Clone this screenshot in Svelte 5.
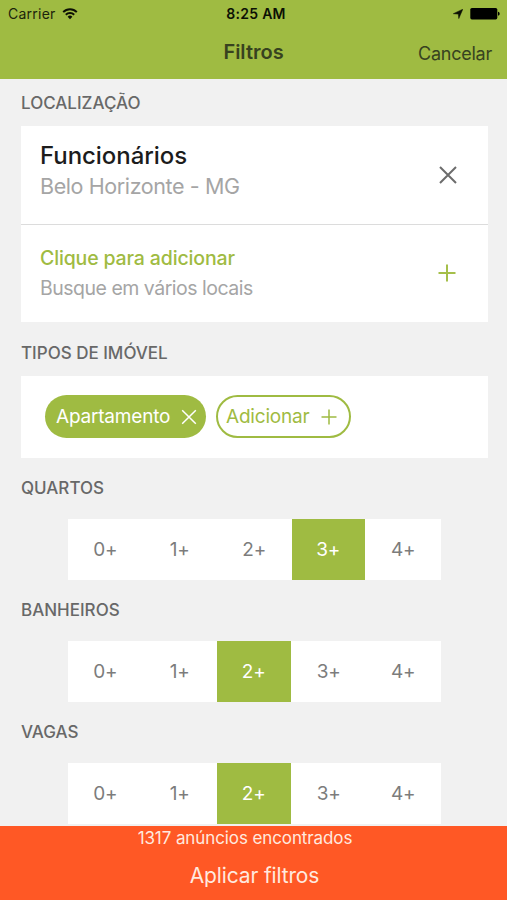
<script lang="ts">
	let rooms = $state([
		{ label: 'Quartos', selected: 3 },
		{ label: 'Banheiros', selected: 2 },
		{ label: 'Vagas', selected: 2 }
	]);

	const options = [0, 1, 2, 3, 4];
</script>

<div class="screen">
	<header>
		<div class="status-bar">
			<div class="carrier">
				<span>Carrier</span>
				<svg width="16" height="12" viewBox="0 0 16 12" fill="none" stroke="#0c1004" stroke-width="2">
					<path d="M1.2 4.1a9.6 9.6 0 0 1 13.6 0"></path>
					<path d="M3.8 6.8a6 6 0 0 1 8.4 0"></path>
					<path d="M8 11.3 5.6 8.8a3.4 3.4 0 0 1 4.8 0z" fill="#0c1004" stroke="none"></path>
				</svg>
			</div>
			<span class="time">8:25 AM</span>
			<div class="indicators">
				<svg width="10" height="10" viewBox="0 0 10 10"><path d="M9.8.2 5.8 9.6 5.3 5.1.3 4.7z" fill="#0c1004" stroke="#0c1004" stroke-width=".5"></path></svg>
				<svg width="30" height="12" viewBox="0 0 30 12" fill="#000">
					<rect x="0.3" y="0" width="27" height="11.4" rx="1.6"></rect>
					<path d="M28 3.8c2.2.3 2.2 3.5 0 3.8z"></path>
				</svg>
			</div>
		</div>
		<div class="nav-bar">
			<h1>Filtros</h1>
			<button class="cancel">Cancelar</button>
		</div>
	</header>

	<main>
		<h2 class="first">Localização</h2>
		<div class="card">
			<div class="place">
				<div>
					<p class="place-name">Funcionários</p>
					<p class="place-city">Belo Horizonte - MG</p>
				</div>
				<button class="icon-btn" aria-label="Remover">
					<svg width="18" height="18" viewBox="0 0 18 18" fill="none" stroke="#6c6c6c" stroke-width="2"><path d="m1 1 16 16M17 1 1 17"></path></svg>
				</button>
			</div>
			<div class="place add">
				<div>
					<p class="add-title">Clique para adicionar</p>
					<p class="add-text">Busque em vários locais</p>
				</div>
				<button class="icon-btn" aria-label="Adicionar local">
					<svg width="18" height="18" viewBox="0 0 18 18" fill="none" stroke="#a5bf4a" stroke-width="2"><path d="M9 .5v17M.5 9h17"></path></svg>
				</button>
			</div>
		</div>

		<h2 class="types-title">Tipos de imóvel</h2>
		<div class="card types">
			<button class="chip active">
				<span>Apartamento</span>
				<svg width="16" height="16" viewBox="0 0 16 16" fill="none" stroke="currentColor" stroke-width="1.5"><path d="m1.2 1.2 13.6 13.6M14.8 1.2 1.2 14.8"></path></svg>
			</button>
			<button class="chip outline">
				<span>Adicionar</span>
				<svg width="16" height="16" viewBox="0 0 16 16" fill="none" stroke="currentColor" stroke-width="1.5"><path d="M8 .5v15M.5 8h15"></path></svg>
			</button>
		</div>

		{#each rooms as room}
			<h2>{room.label}</h2>
			<div class="segments">
				{#each options as n}
					<button class:selected={room.selected === n} onclick={() => (room.selected = n)}>{n}+</button>
				{/each}
			</div>
		{/each}
	</main>

	<footer>
		<p class="count">1317 anúncios encontrados</p>
		<button class="apply">Aplicar filtros</button>
	</footer>
</div>

<style>
	:global(body) {
		margin: 0;
	}

	.screen {
		display: flex;
		flex-direction: column;
		width: 507px;
		height: 900px;
		overflow: hidden;
		background: #f1f1f1;
		font-family: Inter, "Liberation Sans", sans-serif;
	}

	p, h1, h2 {
		margin: 0;
		white-space: nowrap;
	}

	button {
		padding: 0;
		border: none;
		background: none;
		font: inherit;
		color: inherit;
		letter-spacing: inherit;
		cursor: pointer;
		white-space: nowrap;
	}

	svg {
		display: block;
		flex-shrink: 0;
	}

	header {
		flex: none;
		height: 79px;
		background: #9fbb42;
	}

	.status-bar {
		display: grid;
		grid-template-columns: 1fr auto 1fr;
		align-items: center;
		height: 27px;
		padding: 0 7px 0 8px;
		font-size: 14px;
		color: #1c230b;
	}

	.carrier {
		display: flex;
		align-items: center;
		gap: 6px;
		letter-spacing: 0.25px;
	}

	.time {
		padding-left: 4px;
		font-weight: 600;
		color: #0c1004;
		letter-spacing: 0.3px;
	}

	.indicators {
		display: flex;
		align-items: center;
		justify-content: flex-end;
		gap: 7px;
	}

	.nav-bar {
		display: grid;
		grid-template-columns: 1fr auto 1fr;
		align-items: center;
		height: 50px;
		padding: 0 15px;
		color: #37421f;
	}

	h1 {
		grid-column: 2;
		font-size: 20px;
		font-weight: 600;
		line-height: 24px;
	}

	.cancel {
		justify-self: end;
		padding-top: 3px;
		font-size: 18px;
		letter-spacing: -0.25px;
	}

	main {
		flex: 1;
		min-height: 0;
		padding: 0 19px 0 21px;
	}

	h2 {
		display: flex;
		align-items: center;
		height: 61px;
		padding-bottom: 1px;
		box-sizing: border-box;
		font-size: 17px;
		font-weight: 500;
		text-transform: uppercase;
		color: #686868;
	}

	h2.first {
		height: 47px;
		padding-bottom: 0;
	}

	h2.types-title {
		height: 54px;
		padding: 7px 0 0;
	}

	.card {
		background: #fff;
	}

	.place {
		display: flex;
		justify-content: space-between;
		height: 99px;
		padding: 15px 31px 0 19px;
		box-sizing: border-box;
		border-bottom: 1px solid #dcdcdc;
	}

	.place.add {
		height: 97px;
		padding: 18px 32px 0 19px;
		border-bottom: none;
	}

	.icon-btn {
		align-self: flex-start;
		padding-top: 25px;
	}

	.add .icon-btn {
		padding-top: 21px;
	}

	.place-name {
		font-size: 24px;
		font-weight: 500;
		line-height: 30px;
		letter-spacing: -0.05px;
		color: #1c1c1c;
	}

	.place-city {
		font-size: 21.5px;
		line-height: 31px;
		letter-spacing: -0.4px;
		color: #a5a5a5;
	}

	.add-title {
		font-size: 19.5px;
		font-weight: 500;
		line-height: 31px;
		letter-spacing: -0.15px;
		color: #9fbb42;
	}

	.add-text {
		font-size: 19.5px;
		line-height: 28px;
		letter-spacing: -0.5px;
		color: #a5a5a5;
	}

	.types {
		display: flex;
		align-items: center;
		gap: 10px;
		height: 82px;
		padding: 0 0 1px 24px;
		box-sizing: border-box;
	}

	.chip {
		display: flex;
		align-items: center;
		justify-content: space-between;
		height: 43px;
		box-sizing: border-box;
		border-radius: 22px;
		font-size: 19px;
		letter-spacing: -0.2px;
	}

	.chip.active {
		width: 161px;
		padding: 0 9px 0 11px;
		background: #9fbb42;
		color: #fff;
	}

	.chip.outline {
		width: 135px;
		padding: 0 12px 0 8px;
		border: 2px solid #9fbb42;
		color: #9fbb42;
	}

	.segments {
		display: grid;
		grid-template-columns: repeat(5, 1fr);
		width: 372.5px;
		height: 61px;
		margin-left: 47px;
		background: #fff;
		color: #7c7c7c;
		font-size: 19px;
		letter-spacing: -0.2px;
	}

	.segments .selected {
		margin-right: 1px;
		background: #9fbb42;
		color: #fff;
	}

	footer {
		display: flex;
		flex-direction: column;
		align-items: center;
		flex: none;
		height: 74px;
		background: #ff5825;
		color: #ffe9df;
	}

	.count {
		padding-right: 17px;
		font-size: 17px;
		line-height: 24px;
		letter-spacing: -0.1px;
	}

	.apply {
		padding-left: 2px;
		font-size: 21px;
		line-height: 52px;
		letter-spacing: -0.15px;
	}
</style>
